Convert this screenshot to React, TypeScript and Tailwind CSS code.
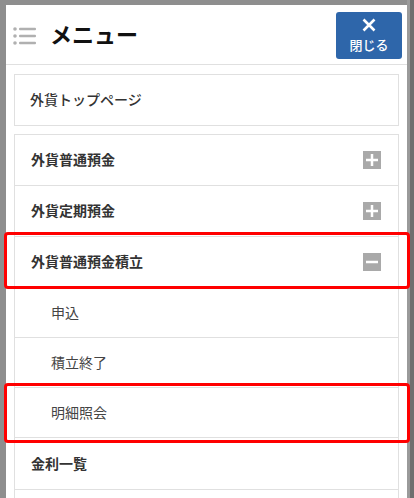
import React from "react";

const font = { fontFamily: '"Noto Sans CJK JP", "Noto Sans", sans-serif' };

interface MenuRowProps {
  label: string;
  sub?: boolean;
  icon?: "plus" | "minus";
  height: string;
}

const ToggleIcon = ({ type }: { type: "plus" | "minus" }) => (
  <span className="flex size-[18px] items-center justify-center bg-[#a9a9a9]">
    <svg width="12" height="12" viewBox="0 0 12 12">
      <rect x="0" y="4.75" width="12" height="2.5" fill="#fff" />
      {type === "plus" && <rect x="4.75" y="0" width="2.5" height="12" fill="#fff" />}
    </svg>
  </span>
);

const MenuRow = ({ label, sub, icon, height }: MenuRowProps) => (
  <div
    className={`flex items-center justify-between border-b border-[#e0e0e0] pr-[17px] ${height} ${
      sub ? "pl-[36px] font-normal text-[#444]" : "pl-[16px] font-bold text-[#333]"
    }`}
  >
    <span className="-mt-[2px] text-[14px] leading-none">{label}</span>
    {icon && <ToggleIcon type={icon} />}
  </div>
);

export default function App() {
  return (
    <div
      className="relative h-[498px] w-[414px] overflow-hidden bg-[#8e8e8e]"
      style={font}
    >
      <div className="flex h-full">
        <div className="ml-[6px] mt-[5px] flex h-full w-[401px] flex-col bg-white">
          {/* header */}
          <div className="flex h-[60px] shrink-0 items-start border-b border-[#e0e0e0] pl-[7px] pr-[5px]">
            <svg width="24" height="18" viewBox="0 0 24 18" className="mt-[22px]">
              {[2, 9, 16].map((y) => (
                <g key={y} fill="#b0b0b0">
                  <circle cx="2" cy={y} r="1.8" />
                  <rect x="6" y={y - 1.2} width="17" height="2.4" rx="1" />
                </g>
              ))}
            </svg>
            <h1 className="ml-[13px] mt-[17px] text-[22px] font-bold leading-none text-[#111]">
              メニュー
            </h1>
            <button className="ml-auto mt-[7px] flex h-[47px] w-[66px] flex-col items-center rounded-[3px] bg-[#2e66aa] pt-[6px] text-white">
              <svg width="14" height="14" viewBox="0 0 14 14">
                <path d="M1.5 1.5 L12.5 12.5 M12.5 1.5 L1.5 12.5" stroke="#fff" strokeWidth="2.6" />
              </svg>
              <span className="mt-[6px] text-[13px] font-medium leading-none">閉じる</span>
            </button>
          </div>

          {/* list */}
          <div className="flex flex-col px-[8px] pt-[9px]">
            <div className="border border-[#e0e0e0]">
              <div className="flex h-[50px] items-center pl-[15px] text-[14px] font-medium text-[#333]">
                <span className="-mt-[2px] leading-none">外貨トップページ</span>
              </div>
            </div>
            <div className="mt-[8px] border-x border-t border-[#e0e0e0]">
              <MenuRow label="外貨普通預金" icon="plus" height="h-[51px]" />
              <MenuRow label="外貨定期預金" icon="plus" height="h-[51px]" />
              <MenuRow label="外貨普通預金積立" icon="minus" height="h-[51px]" />
              <MenuRow label="申込" sub height="h-[50px]" />
              <MenuRow label="積立終了" sub height="h-[50px]" />
              <MenuRow label="明細照会" sub height="h-[50px]" />
              <MenuRow label="金利一覧" height="h-[52px]" />
              <div className="h-[40px]" />
            </div>
          </div>
        </div>
        <div className="mt-0 h-full w-[3px] bg-[#9a9a9a]" />
        <div className="h-full flex-1 bg-[#6f6f6f]" />
      </div>

      {/* annotation boxes */}
      <div className="absolute left-[4px] top-[232px] h-[57px] w-[406px] rounded-[4px] border-[3px] border-[#ff0000]" />
      <div className="absolute left-[4px] top-[383px] h-[60px] w-[406px] rounded-[4px] border-[3px] border-[#ff0000]" />
    </div>
  );
}
